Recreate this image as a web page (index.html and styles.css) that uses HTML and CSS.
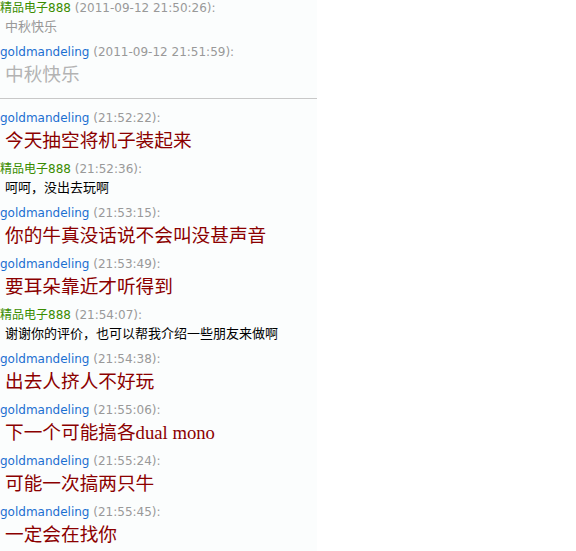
FILE: index.html
```html
<!DOCTYPE html>
<html lang="zh-CN">
<head>
    <meta charset="UTF-8">
    <title>聊天记录</title>
    <link rel="stylesheet" href="styles.css">
</head>
<body>
    <div id="chat-log">
        <!-- 历史消息 -->
        <div class="history">
            <div class="message">
                <div class="message-head"><span class="sender friend">精品电子888</span> <span class="time">(2011-09-12 21:50:26):</span></div>
                <div class="message-body small old">中秋快乐</div>
            </div>
            <div class="message">
                <div class="message-head"><span class="sender me">goldmandeling</span> <span class="time">(2011-09-12 21:51:59):</span></div>
                <div class="message-body big old">中秋快乐</div>
            </div>
        </div>

        <hr class="divider">

        <!-- 当前消息 -->
        <div class="current">
            <div class="message">
                <div class="message-head"><span class="sender me">goldmandeling</span> <span class="time">(21:52:22):</span></div>
                <div class="message-body big">今天抽空将机子装起来</div>
            </div>
            <div class="message">
                <div class="message-head"><span class="sender friend">精品电子888</span> <span class="time">(21:52:36):</span></div>
                <div class="message-body small">呵呵，没出去玩啊</div>
            </div>
            <div class="message">
                <div class="message-head"><span class="sender me">goldmandeling</span> <span class="time">(21:53:15):</span></div>
                <div class="message-body big">你的牛真没话说不会叫没甚声音</div>
            </div>
            <div class="message">
                <div class="message-head"><span class="sender me">goldmandeling</span> <span class="time">(21:53:49):</span></div>
                <div class="message-body big">要耳朵靠近才听得到</div>
            </div>
            <div class="message">
                <div class="message-head"><span class="sender friend">精品电子888</span> <span class="time">(21:54:07):</span></div>
                <div class="message-body small">谢谢你的评价，也可以帮我介绍一些朋友来做啊</div>
            </div>
            <div class="message">
                <div class="message-head"><span class="sender me">goldmandeling</span> <span class="time">(21:54:38):</span></div>
                <div class="message-body big">出去人挤人不好玩</div>
            </div>
            <div class="message">
                <div class="message-head"><span class="sender me">goldmandeling</span> <span class="time">(21:55:06):</span></div>
                <div class="message-body big">下一个可能搞各dual mono</div>
            </div>
            <div class="message">
                <div class="message-head"><span class="sender me">goldmandeling</span> <span class="time">(21:55:24):</span></div>
                <div class="message-body big">可能一次搞两只牛</div>
            </div>
            <div class="message">
                <div class="message-head"><span class="sender me">goldmandeling</span> <span class="time">(21:55:45):</span></div>
                <div class="message-body big">一定会在找你</div>
            </div>
        </div>
    </div>
</body>
</html>
```

FILE: styles.css
```css
body, html {
    margin: 0;
    padding: 0;
    height: 100%;
}

body {
    background-color: #fff;
    font-family: "DejaVu Sans", "Noto Sans CJK SC", sans-serif;
}

#chat-log {
    width: 317px;
    min-height: 100%;
    background-color: #fbfdfd;
    padding-top: 0;
    overflow: hidden;
}

.history {
    margin-top: -1px;
}

.message {
    margin-bottom: 6px;
}

.message-head {
    font-size: 12px;
    line-height: 18px;
    white-space: nowrap;
}

.sender.me {
    color: #1b6fd1;
}

.sender.friend {
    color: #3a8c00;
}

.time {
    color: #999;
}

.message-body {
    padding-left: 5px;
    white-space: nowrap;
    font-family: "Liberation Serif", "Noto Sans CJK SC", serif;
}

.message-body.small {
    font-size: 13px;
    line-height: 20px;
    color: #000;
}

.message-body.big {
    font-size: 18.67px;
    line-height: 27px;
    color: #8b0000;
}

.message-body.old.small {
    color: #999;
}

.message-body.old.big {
    color: #b3b3b3;
}

/* el margen de arriba colapsa con el del último mensaje */
.divider {
    border: none;
    border-top: 1px solid #c8c8c8;
    height: 0;
    margin: 10px 0 10px 0;
}
```
